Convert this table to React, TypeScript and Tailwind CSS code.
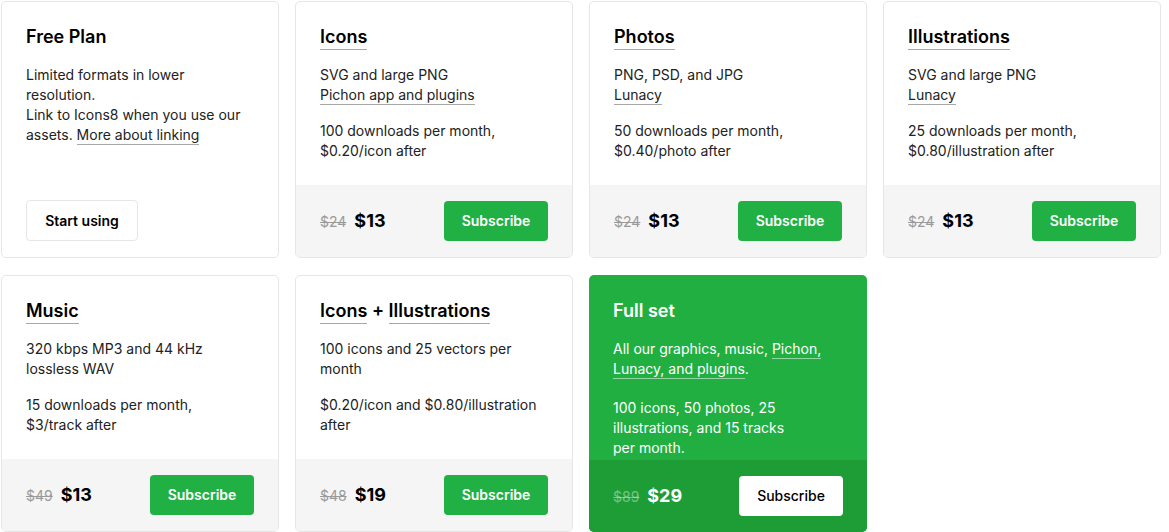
import type { FC, ReactNode } from "react";

const Link: FC<{ children: ReactNode; light?: boolean }> = ({ children, light }) => (
	<span className={light ? "border-b border-white/50 pb-px" : "border-b border-[#a8a8a8] pb-px"}>
		{children}
	</span>
);

const Title: FC<{ children: ReactNode; light?: boolean }> = ({ children, light }) => (
	<div className={light ? "text-lg leading-6 font-semibold text-white" : "text-lg leading-6 font-semibold text-black"}>
		{children}
	</div>
);

const U: FC<{ children: ReactNode }> = ({ children }) => (
	<span className="border-b border-[#a8a8a8] pb-0.5">{children}</span>
);

const Price: FC<{ old: string; now: string }> = ({ old, now }) => (
	<div className="flex items-baseline gap-2">
		<span className="text-sm text-[#9a9a9a] line-through">{old}</span>
		<span className="text-lg font-bold text-black">{now}</span>
	</div>
);

const SubscribeButton = () => (
	<button
		type="button"
		className="h-10 w-[104px] rounded bg-[#21b043] text-sm font-semibold text-white"
	>
		Subscribe
	</button>
);

const PlanCard: FC<{
	title: ReactNode;
	children: ReactNode;
	old: string;
	now: string;
}> = ({ title, children, old, now }) => (
	<div className="flex h-[257px] flex-col overflow-hidden rounded-[5px] border border-[#e6e6e6] bg-white">
		<div className="px-6 pt-[23px]">
			<Title>{title}</Title>
			<div className="mt-4 flex flex-col gap-4 text-sm leading-5 text-[#222]">{children}</div>
		</div>
		<div className="mt-auto flex items-center justify-between bg-[#f5f5f5] px-6 py-4">
			<Price old={old} now={now} />
			<SubscribeButton />
		</div>
	</div>
);

export default function App() {
	return (
		<div
			className="bg-white pl-px pt-px"
			style={{ fontFamily: "Inter, 'Noto Sans', sans-serif" }}
		>
			<div className="grid w-[1160px] grid-cols-4 gap-x-4 gap-y-[17px]">
				<div className="flex h-[257px] flex-col rounded-[5px] border border-[#e6e6e6] bg-white">
					<div className="px-6 pt-[23px]">
						<Title>Free Plan</Title>
						<p className="mt-4 text-sm leading-5 text-[#222]">
							Limited formats in lower resolution.
							<br />
							Link to Icons8 when you use our assets. <Link>More about linking</Link>
						</p>
					</div>
					<div className="mt-auto px-6 pb-4">
						<button
							type="button"
							className="h-[41px] w-[112px] rounded border border-[#e6e6e6] bg-white text-sm font-semibold text-black"
						>
							Start using
						</button>
					</div>
				</div>

				<PlanCard title={<U>Icons</U>} old="$24" now="$13">
					<p>
						SVG and large PNG
						<br />
						<Link>Pichon app and plugins</Link>
					</p>
					<p>
						100 downloads per month,
						<br />
						$0.20/icon after
					</p>
				</PlanCard>

				<PlanCard title={<U>Photos</U>} old="$24" now="$13">
					<p>
						PNG, PSD, and JPG
						<br />
						<Link>Lunacy</Link>
					</p>
					<p>
						50 downloads per month,
						<br />
						$0.40/photo after
					</p>
				</PlanCard>

				<PlanCard title={<U>Illustrations</U>} old="$24" now="$13">
					<p>
						SVG and large PNG
						<br />
						<Link>Lunacy</Link>
					</p>
					<p>
						25 downloads per month,
						<br />
						$0.80/illustration after
					</p>
				</PlanCard>

				<PlanCard title={<U>Music</U>} old="$49" now="$13">
					<p>
						320 kbps MP3 and 44 kHz
						<br />
						lossless WAV
					</p>
					<p>
						15 downloads per month,
						<br />
						$3/track after
					</p>
				</PlanCard>

				<PlanCard
					title={
						<>
							<U>Icons</U> + <U>Illustrations</U>
						</>
					}
					old="$48"
					now="$19"
				>
					<p>
						100 icons and 25 vectors per
						<br />
						month
					</p>
					<p>
						$0.20/icon and $0.80/illustration
						<br />
						after
					</p>
				</PlanCard>

				<div className="flex h-[257px] flex-col overflow-hidden rounded-[5px] bg-[#21af41]">
					<div className="px-6 pt-6">
						<Title light>Full set</Title>
						<div className="mt-4 flex flex-col gap-[19px] text-sm leading-5 text-white">
							<p>
								All our graphics, music, <Link light>Pichon,</Link>
								<br />
								<Link light>Lunacy, and plugins</Link>.
							</p>
							<p>
								100 icons, 50 photos, 25
								<br />
								illustrations, and 15 tracks
								<br />
								per month.
							</p>
						</div>
					</div>
					<div className="mt-auto flex items-center justify-between bg-[#1e9d37] px-6 py-4">
						<div className="flex items-baseline gap-2">
							<span className="text-sm text-white/40 line-through">$89</span>
							<span className="text-lg font-bold text-white">$29</span>
						</div>
						<button
							type="button"
							className="h-10 w-[104px] rounded bg-white text-sm font-medium text-black"
						>
							Subscribe
						</button>
					</div>
				</div>
			</div>
		</div>
	);
}
